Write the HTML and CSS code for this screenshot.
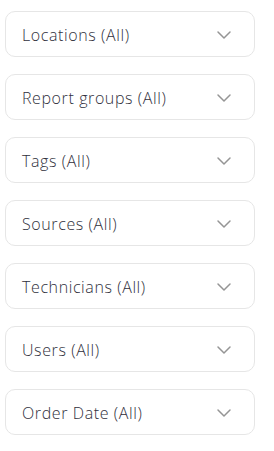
FILE: index.html
```html
<!DOCTYPE html>
<html lang="en">
<head>
  <meta charset="UTF-8" />
  <meta name="viewport" content="width=device-width, initial-scale=1.0" />
  <title>Filters</title>
  <link rel="stylesheet" href="styles.css">
</head>
<body>
  <div class="filters">
    <div class="filter"><span>Locations (All)</span><svg class="chevron" viewBox="0 0 16 10"><path d="M2 2l6 6 6-6"/></svg></div>
    <div class="filter"><span>Report groups (All)</span><svg class="chevron" viewBox="0 0 16 10"><path d="M2 2l6 6 6-6"/></svg></div>
    <div class="filter"><span>Tags (All)</span><svg class="chevron" viewBox="0 0 16 10"><path d="M2 2l6 6 6-6"/></svg></div>
    <div class="filter"><span>Sources (All)</span><svg class="chevron" viewBox="0 0 16 10"><path d="M2 2l6 6 6-6"/></svg></div>
    <div class="filter"><span>Technicians (All)</span><svg class="chevron" viewBox="0 0 16 10"><path d="M2 2l6 6 6-6"/></svg></div>
    <div class="filter"><span>Users (All)</span><svg class="chevron" viewBox="0 0 16 10"><path d="M2 2l6 6 6-6"/></svg></div>
    <div class="filter"><span>Order Date (All)</span><svg class="chevron" viewBox="0 0 16 10"><path d="M2 2l6 6 6-6"/></svg></div>
  </div>
</body>
</html>
```

FILE: styles.css
```css
body {
  margin: 0;
  background: #ffffff;
  font-family: 'Open Sans', sans-serif;
}

.filters {
  display: flex;
  flex-direction: column;
  gap: 17px;
  padding: 11px 0 0 5px;
}

.filter {
  box-sizing: border-box;
  width: 250px;
  height: 46px;
  display: flex;
  align-items: center;
  justify-content: space-between;
  padding: 1px 22px 0 16px;
  border: 1px solid #e6e6e6;
  border-radius: 10px;
  color: #30303c;
  font-size: 16px;
  font-weight: 300;
  letter-spacing: 0.6px;
}

.chevron {
  width: 16px;
  height: 10px;
  fill: none;
  stroke: #959595;
  stroke-width: 1.5;
  stroke-linecap: round;
  stroke-linejoin: round;
}
```
